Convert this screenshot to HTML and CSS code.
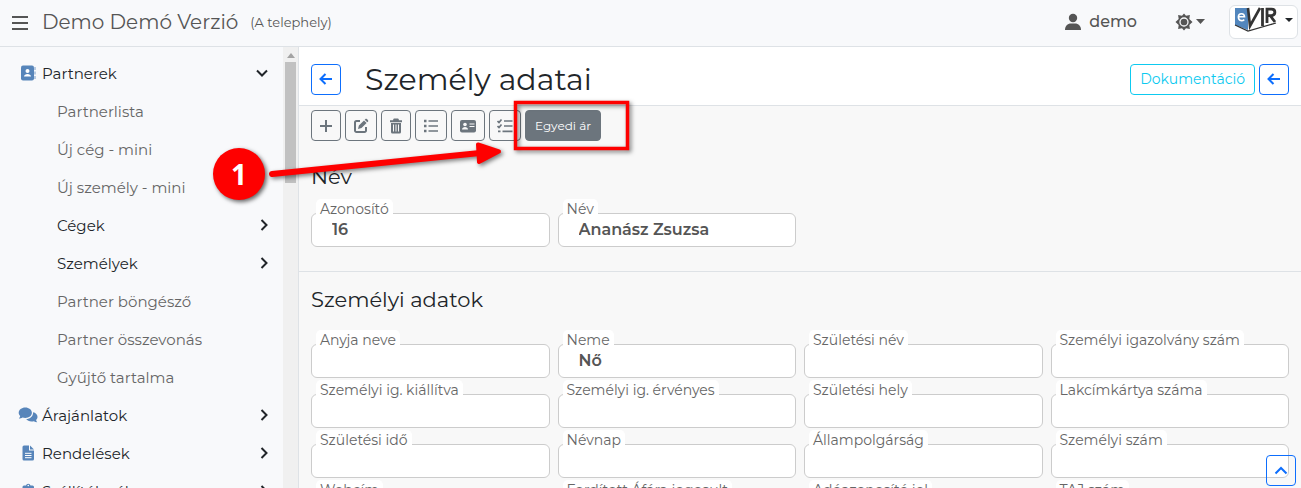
FILE: index.html
```
<!DOCTYPE html>
<html lang="hu">
<head>
    <meta charset="UTF-8">
    <meta name="viewport" content="width=device-width, initial-scale=1.0">
    <title>Személy adatai</title>
    <link rel="stylesheet" href="styles.css">
</head>
<body>
    <header class="topbar">
        <button class="plain" aria-label="Menü">
            <svg width="18" height="18" viewBox="0 0 18 18"><path d="M1 4h16M1 10h16M1 16h16" stroke="currentColor" stroke-width="2.2"/></svg>
        </button>
        <a class="brand" href="#">Demo Demó Verzió</a>
        <span class="site">(A telephely)</span>
        <a class="user" href="#">
            <svg width="18" height="18" viewBox="0 0 18 18" fill="currentColor"><circle cx="9" cy="5" r="4.2"/><path d="M1 17c0-4 2.500-6.500 6-6.500h4c3.500 0 6 2.500 6 6.500z"/></svg>
            demo
        </a>
        <button class="plain theme" aria-label="Téma">
            <svg width="18" height="18" viewBox="0 0 18 18"><path fill="currentColor" d="M9 .5l2 2.300 3.900-.7-.6 3.900L17.500 9l-3.200 3 .6 3.900-3.900-.7-2 2.300-2-2.300-3.900.7.600-3.900L.5 9l3.200-3-.6-3.900 3.900.7z"/><circle cx="9" cy="9" r="4" fill="none" stroke="#f8f9fb" stroke-width="1.300"/></svg>
            <svg width="9" height="5" viewBox="0 0 9 5"><path d="M0 0h9L4.500 5z" fill="currentColor"/></svg>
        </button>
        <button class="logo" aria-label="eVIR">
            <svg width="44" height="26" viewBox="0 0 44 26">
                <path d="M1 1h13v22L1 18z" fill="#5286bd"/>
                <path d="M10.500 9.800H4.400c.1-4 5.900-4.300 6.100 0zM4.400 9.800c0 4.600 4 4.300 5.900 2.800" fill="none" stroke="#fff" stroke-width="1.600"/>
                <path d="M14 1l2 18L26 1" fill="none" stroke="#333" stroke-width="2.600"/>
                <path d="M28.500 1v18M33 16V2.200h4.500c4.500 0 4.500 6 0 6.400H34M36.500 9l4.500 6" fill="none" stroke="#333" stroke-width="2.800"/>
                <path d="M1 18l13 6 28-8" fill="none" stroke="#333" stroke-width="1.300"/>
            </svg>
            <svg width="8" height="4" viewBox="0 0 8 4"><path d="M0 0h8L4 4z" fill="#212529"/></svg>
        </button>
    </header>

    <div class="layout">
        <aside class="sidebar">
            <nav class="menu">
                <a class="item top" href="#">
                    <svg class="icon" width="20" height="18" viewBox="0 0 20 18"><rect x="3" y="1.500" width="13" height="15" rx="2" fill="#5785ba"/><path d="M17 3v3M17 7.500v3M17 12v3" stroke="#a9c0db" stroke-width="1.600"/><circle cx="9.500" cy="7" r="2" fill="#fff"/><path d="M6 12.500c0-3.500 7-3.500 7 0z" fill="#fff"/></svg>
                    <span>Partnerek</span>
                    <svg class="arrow" width="14" height="14" viewBox="0 0 14 14"><path d="M2 4.500l5 5 5-5"/></svg>
                </a>
                <a class="item sub" href="#">Partnerlista</a>
                <a class="item sub" href="#">Új cég - mini</a>
                <a class="item sub" href="#">Új személy - mini</a>
                <a class="item sub group" href="#">
                    <span>Cégek</span>
                    <svg class="arrow" width="14" height="14" viewBox="0 0 14 14"><path d="M6.500 2l5 5-5 5"/></svg>
                </a>
                <a class="item sub group" href="#">
                    <span>Személyek</span>
                    <svg class="arrow" width="14" height="14" viewBox="0 0 14 14"><path d="M6.500 2l5 5-5 5"/></svg>
                </a>
                <a class="item sub" href="#">Partner böngésző</a>
                <a class="item sub" href="#">Partner összevonás</a>
                <a class="item sub" href="#">Gyűjtő tartalma</a>
                <a class="item top" href="#">
                    <svg class="icon" width="20" height="18" viewBox="0 0 20 18" fill="#5785ba"><path d="M7.300 1.500c3.700 0 6.600 2.300 6.600 5.200s-2.900 5.200-6.600 5.200c-1 0-2-.2-2.800-.5C3.500 12.100 2.200 12.600.9 12.600c.7-.8 1.200-1.700 1.300-2.600C1.200 9.100.7 8 .7 6.700c0-2.900 2.900-5.200 6.600-5.200z"/><path d="M15.100 6.200c2.600.5 4.400 2.400 4.400 4.600 0 1.200-.5 2.300-1.400 3.100.1.900.6 1.700 1.200 2.400-1.300 0-2.500-.5-3.500-1.100-3 .9-6.300-.1-7.600-2.200 4-.1 7-2.800 6.900-6.800z"/></svg>
                    <span>Árajánlatok</span>
                    <svg class="arrow" width="14" height="14" viewBox="0 0 14 14"><path d="M6.500 2l5 5-5 5"/></svg>
                </a>
                <a class="item top" href="#">
                    <svg class="icon" width="20" height="18" viewBox="0 0 20 18"><path d="M6 1.500h5v5h5V15a1.500 1.500 0 0 1-1.500 1.500H6A1.500 1.500 0 0 1 4.500 15V3A1.500 1.500 0 0 1 6 1.500zM12 1.500L16 5.500h-4z" fill="#5785ba"/><path d="M7 9.300h6.500M7 11.500h6.500M7 13.700h6.500" stroke="#fff" stroke-width="1"/></svg>
                    <span>Rendelések</span>
                    <svg class="arrow" width="14" height="14" viewBox="0 0 14 14"><path d="M6.500 2l5 5-5 5"/></svg>
                </a>
                <a class="item top" href="#">
                    <svg class="icon" width="20" height="18" viewBox="0 0 20 18"><path d="M6 3.500h2a2.300 2.300 0 0 1 4.500 0h2A1.500 1.500 0 0 1 16 5v10a1.500 1.500 0 0 1-1.500 1.500H6A1.500 1.500 0 0 1 4.500 15V5A1.500 1.500 0 0 1 6 3.500z" fill="#5785ba"/><circle cx="10.250" cy="3.500" r=".8" fill="#fff"/></svg>
                    <span>Szállítólevél</span>
                    <svg class="arrow" width="14" height="14" viewBox="0 0 14 14"><path d="M6.500 2l5 5-5 5"/></svg>
                </a>
            </nav>
            <div class="scrollbar">
                <svg width="8" height="5" viewBox="0 0 8 5"><path d="M4 0l4 5H0z" fill="#a3a3a3"/></svg>
                <div class="thumb"></div>
            </div>
        </aside>

        <main class="main">
            <div class="page-head">
                <button class="btn blue" aria-label="Vissza">
                    <svg width="16" height="16" viewBox="0 0 16 16"><path d="M14 8H2.500M7.500 3l-5 5 5 5"/></svg>
                </button>
                <h1>Személy adatai</h1>
                <button class="btn cyan">Dokumentáció</button>
                <button class="btn blue" aria-label="Vissza">
                    <svg width="16" height="16" viewBox="0 0 16 16"><path d="M14 8H2.500M7.500 3l-5 5 5 5"/></svg>
                </button>
            </div>

            <div class="content">
                <div class="toolbar">
                    <button class="btn" aria-label="Új">
                        <svg width="14" height="14" viewBox="0 0 14 14"><path d="M7 1v12M1 7h12"/></svg>
                    </button>
                    <button class="btn" aria-label="Szerkesztés">
                        <svg width="16" height="16" viewBox="0 0 16 16"><path d="M7 3H3.500A1.500 1.500 0 0 0 2 4.500v8A1.500 1.500 0 0 0 3.500 14h8a1.500 1.500 0 0 0 1.500-1.500V9"/><path d="M5 11l.9-3.500L11 2.400l2.600 2.600-5.100 5.100zM11.700 1.700l.8-.8c.9-.9 3.500 1.700 2.600 2.600l-.8.8z" fill="currentColor" stroke="none"/></svg>
                    </button>
                    <button class="btn" aria-label="Törlés">
                        <svg width="14" height="16" viewBox="0 0 14 16"><path d="M1 3.200h12M4.800 2.500l.6-1h3.200l.6 1"/><path d="M2 5h10v9a1.500 1.500 0 0 1-1.500 1.500h-7A1.500 1.500 0 0 1 2 14z" fill="currentColor" stroke="none"/><path d="M4.500 6.500v7M7 6.500v7M9.500 6.500v7" stroke="#f8f8f8" stroke-width="1"/></svg>
                    </button>
                    <button class="btn" aria-label="Lista">
                        <svg width="16" height="16" viewBox="0 0 16 16"><path d="M1 3h2.500M1 8h2.500M1 13h2.500" stroke-width="2.500"/><path d="M5.500 3H15M5.500 8H15M5.500 13H15" stroke-width="1.700"/></svg>
                    </button>
                    <button class="btn" aria-label="Névjegy">
                        <svg width="18" height="16" viewBox="0 0 18 16"><rect x="1" y="2" width="16" height="12.500" rx="2" fill="currentColor" stroke="none"/><circle cx="6" cy="6.500" r="1.800" fill="#f8f8f8" stroke="none"/><path d="M3 11.500c0-3.500 6-3.500 6 0z" fill="#f8f8f8" stroke="none"/><path d="M10.500 6h5M10.500 8.500h5" stroke="#f8f8f8" stroke-width="1.200"/></svg>
                    </button>
                    <button class="btn" aria-label="Feladatok">
                        <svg width="16" height="16" viewBox="0 0 16 16"><path d="M.5 3l1.500 1.500L4.500 1.500M.5 8L2 9.500l2.500-3M1 13.300h2.500M7 3h8.500M7 8h8.500M5.500 13.300h10" stroke-width="1.700"/></svg>
                    </button>
                    <button class="btn filled">Egyedi ár</button>
                </div>

                <section class="section">
                    <h2>Név</h2>
                    <div class="fields">
                        <div class="field"><label for="azonosito">Azonosító</label><input id="azonosito" type="text" value="16" readonly></div>
                        <div class="field"><label for="nev">Név</label><input id="nev" type="text" value="Ananász Zsuzsa" readonly></div>
                    </div>
                </section>

                <section class="section">
                    <h2>Személyi adatok</h2>
                    <div class="fields">
                        <div class="field"><label for="anyja">Anyja neve</label><input id="anyja" type="text" readonly></div>
                        <div class="field"><label for="neme">Neme</label><input id="neme" type="text" value="Nő" readonly></div>
                        <div class="field"><label for="szulnev">Születési név</label><input id="szulnev" type="text" readonly></div>
                        <div class="field"><label for="szig">Személyi igazolvány szám</label><input id="szig" type="text" readonly></div>
                        <div class="field"><label for="kiallitva">Személyi ig. kiállítva</label><input id="kiallitva" type="text" readonly></div>
                        <div class="field"><label for="ervenyes">Személyi ig. érvényes</label><input id="ervenyes" type="text" readonly></div>
                        <div class="field"><label for="szulhely">Születési hely</label><input id="szulhely" type="text" readonly></div>
                        <div class="field"><label for="lakcim">Lakcímkártya száma</label><input id="lakcim" type="text" readonly></div>
                        <div class="field"><label for="szulido">Születési idő</label><input id="szulido" type="text" readonly></div>
                        <div class="field"><label for="nevnap">Névnap</label><input id="nevnap" type="text" readonly></div>
                        <div class="field"><label for="allampolgar">Állampolgárság</label><input id="allampolgar" type="text" readonly></div>
                        <div class="field"><label for="szemszam">Személyi szám</label><input id="szemszam" type="text" readonly></div>
                        <div class="field"><label for="webcim">Webcím</label><input id="webcim" type="text" readonly></div>
                        <div class="field"><label for="afa">Fordított Áfára jogosult</label><input id="afa" type="text" readonly></div>
                        <div class="field"><label for="adoazon">Adóazonosító jel</label><input id="adoazon" type="text" readonly></div>
                        <div class="field"><label for="taj">TAJ szám</label><input id="taj" type="text" readonly></div>
                    </div>
                </section>
            </div>
        </main>
    </div>

    <button class="btn blue to-top" aria-label="Fel">
        <svg width="16" height="16" viewBox="0 0 16 16"><path d="M2.500 10.500L8 5l5.500 5.500"/></svg>
    </button>

    <!-- tutorial marks -->
    <svg class="marks" width="640" height="220" viewBox="0 0 640 220">
        <rect x="515.500" y="102.500" width="112" height="46" fill="none" stroke="#fe0000" stroke-width="3.500"/>
        <path d="M272 174L480 153" stroke="#fe0000" stroke-width="6" stroke-linecap="round"/>
        <path d="M478 144.500L499 151.500l-20 10.500z" fill="#fe0000" stroke="#fe0000" stroke-width="4" stroke-linejoin="round"/>
    </svg>
    <span class="step">1</span>
</body>
</html>
```
FILE: styles.css
```
* {
    box-sizing: border-box;
}
body {
    font-family: Montserrat, Inter, sans-serif;
    font-size: 15px;
    color: #212529;
    margin: 0;
    height: 100vh;
    display: flex;
    flex-direction: column;
    overflow: hidden;
    background: #f8f8f8;
}
a {
    color: inherit;
    text-decoration: none;
}
button {
    font-family: inherit;
    cursor: pointer;
}
svg {
    flex: none;
}
.topbar {
    display: flex;
    align-items: center;
    height: 47px;
    flex: none;
    padding: 0 3px 3px 11px;
    background: #f8f9fb;
    border-bottom: 1px solid #dee2e6;
    color: #555;
}
.plain {
    display: flex;
    align-items: center;
    gap: 3px;
    padding: 0;
    border: none;
    background: none;
    color: #555;
}
.brand {
    margin-left: 13px;
    font-size: 20px;
}
.site {
    margin-left: 12px;
    font-size: 13px;
}
.user {
    display: flex;
    align-items: center;
    gap: 7px;
    margin-left: auto;
    font-size: 16px;
    font-weight: 500;
}
.theme {
    margin: 0 24px 0 38px;
}
.logo {
    display: flex;
    align-items: center;
    gap: 7px;
    height: 34px;
    padding: 0 4px 4px;
    background: #fff;
    border: 1px solid #dee2e6;
    border-radius: 6px;
}
.layout {
    display: flex;
    flex: 1;
    min-height: 0;
}
.sidebar {
    display: flex;
    width: 299px;
    flex: none;
    background: #f8f9fb;
    border-right: 1px solid #dee2e6;
    overflow: hidden;
}
.menu {
    flex: 1;
    padding-top: 7px;
}
.item {
    display: flex;
    align-items: center;
    height: 38px;
    padding: 0 14px 0 18px;
}
.icon {
    margin-right: 4px;
}
.sub {
    padding-left: 57px;
    color: #666;
}
.group {
    color: #212529;
}
.arrow {
    margin-left: auto;
    fill: none;
    stroke: #212529;
    stroke-width: 2;
}
.scrollbar {
    display: flex;
    flex-direction: column;
    align-items: center;
    gap: 4px;
    width: 15px;
    padding: 6px 2px;
    background: #f0f0f0;
}
.thumb {
    width: 11px;
    height: 121px;
    background: #c1c1c1;
}
.main {
    flex: 1;
    min-width: 0;
    overflow: hidden;
}
.page-head {
    display: flex;
    align-items: center;
    gap: 4px;
    height: 59px;
    padding: 6px 12px 0;
    background: #fff;
    border-bottom: 1px solid #dee2e6;
}
.page-head h1 {
    margin: 0 auto 0 20px;
    font-size: 30px;
    font-weight: 400;
}
.btn {
    display: flex;
    align-items: center;
    justify-content: center;
    height: 31px;
    padding: 0 7px;
    border: 1px solid #6c757d;
    border-radius: 4px;
    background: transparent;
    color: #6c757d;
}
.btn svg {
    fill: none;
    stroke: currentColor;
    stroke-width: 2;
}
.blue {
    width: 30px;
    padding: 0;
    border-color: #0d6efd;
    color: #0d6efd;
}
.cyan {
    padding: 0 9px;
    border-color: #0dcaf0;
    color: #0dcaf0;
    font-size: 14px;
}
.filled {
    padding: 0 9px;
    background: #6c757d;
    color: #fff;
    font-size: 12px;
}
.toolbar {
    display: flex;
    gap: 4px;
    padding: 4px 12px 0;
}
.section {
    padding: 20px 12px 24px;
    border-bottom: 1px solid #dee2e6;
}
.section h2 {
    margin: 0 0 6px;
    font-size: 21px;
    font-weight: 400;
    line-height: 32px;
}
.section + .section {
    padding-top: 12px;
}
.section + .section h2 {
    margin-bottom: 14px;
}
.fields {
    display: grid;
    grid-template-columns: repeat(4, 1fr);
    gap: 2px 8px;
}
.field {
    display: flex;
    flex-direction: column;
}
.field label {
    position: relative;
    align-self: flex-start;
    margin: 0 0 -6px 5px;
    padding: 0 4px;
    font-size: 14px;
    line-height: 20px;
    border-radius: 5px;
    background: #fff;
    color: #666;
}
.field input {
    width: 100%;
    height: 34px;
    padding: 0 20px 2px;
    border: 1px solid #ccc;
    border-radius: 6px;
    background: #fff;
    color: #555;
    font-family: inherit;
    font-size: 16px;
    font-weight: 600;
}
.to-top {
    position: fixed;
    right: 5px;
    bottom: 2px;
}
.marks {
    position: absolute;
    top: 0;
    left: 0;
    pointer-events: none;
    filter: drop-shadow(2px 2px 2px rgba(0, 0, 0, 0.5));
}
.step {
    position: absolute;
    top: 148px;
    left: 213px;
    width: 52px;
    height: 52px;
    border-radius: 50%;
    background: #fe0000;
    color: #fff;
    font: bold 28px/52px "Open Sans", sans-serif;
    text-align: center;
    box-shadow: 2px 2px 4px rgba(0, 0, 0, 0.6);
}
```
